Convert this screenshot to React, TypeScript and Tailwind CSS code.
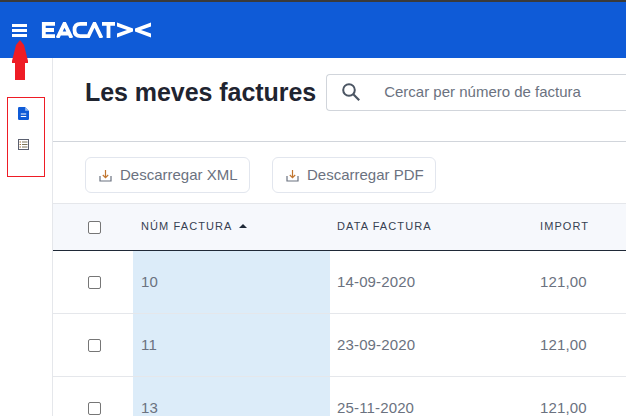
import React from "react";

const font = "font-['Liberation_Sans',Arial,sans-serif]";

const rows = [
  { num: "10", date: "14-09-2020", total: "121,00" },
  { num: "11", date: "23-09-2020", total: "121,00" },
  { num: "13", date: "25-11-2020", total: "121,00" },
];

const Logo = () => (
  <svg width="111" height="16" viewBox="0 0 111 16" fill="none" stroke="white" strokeWidth="3.8">
    <path d="M14 1.9H2.8V14.1H14M2.8 8H13" />
    <path d="M16.5 16L23.5 1.5L30.5 16M19.5 11.5H27.5" />
    <path d="M46 1.9H39.5Q33.5 1.9 33.5 8T39.5 14.1H46" />
    <path d="M46.5 16L53.5 1.5L60.5 16" />
    <path d="M61 1.9H74M67.5 1.9V16" />
    <path d="M76 0.5L92 6.5V9.5L76 15.5V11.5L86 8L76 4.5Z" fill="white" stroke="none" />
    <path d="M110 0.5L94 6.5V9.5L110 15.5V11.5L100 8L110 4.5Z" fill="white" stroke="none" />
  </svg>
);

const Arrow = () => (
  <svg width="16" height="40" viewBox="0 0 16 40" fill="#ee1c25" className="absolute left-[12px] top-[40px]">
    <path d="M8 0L12 5L16 21V23H13V40H3V23H0V21L4 5Z" />
  </svg>
);

const SearchIcon = () => (
  <svg width="18" height="18" viewBox="0 0 18 18" fill="none" stroke="#4b5563" strokeWidth="2">
    <circle cx="7" cy="7" r="5.8" />
    <path d="M11.3 11.3L17.2 17.2" strokeWidth="2.2" />
  </svg>
);

const DownloadIcon = () => (
  <svg width="13" height="13" viewBox="0 0 13 13" fill="none" strokeWidth="1.2">
    <path d="M1 7V12H12V7" stroke="#6b7280" />
    <path d="M6.5 1V8.5M3.8 6L6.5 8.7L9.2 6" stroke="#c2762f" />
  </svg>
);

const DocIcon = () => (
  <svg width="11" height="13" viewBox="0 0 11 13">
    <path d="M1.2 0H7L11 4V11.8Q11 13 9.8 13H1.2Q0 13 0 11.8V1.2Q0 0 1.2 0Z" fill="#0f5bd7" />
    <path d="M7.2 0.5V3.8H10.5Z" fill="#9cc0f2" />
    <path d="M2.8 7H8.2M2.8 9.5H8.2" stroke="white" strokeWidth="1.1" />
  </svg>
);

const ListIcon = () => (
  <svg width="11" height="11" viewBox="0 0 11 11" fill="none" stroke="#5b6070">
    <rect x="0.5" y="0.5" width="10" height="10" />
    <path d="M4 3H9.5M4 5.5H9.5M4 8H9.5" stroke="#7d7558" />
    <path d="M1.5 3H3M1.5 5.5H3M1.5 8H3" stroke="#a0723a" />
  </svg>
);

const Checkbox = () => (
  <span className="block h-[13px] w-[13px] rounded-[2px] border border-[#767676] bg-white" />
);

const Button = ({ label, width }: { label: string; width: string }) => (
  <button className={`flex h-[36px] items-center gap-[8px] rounded-md border border-[#e2e6ee] bg-white pl-[13px] text-[15px] text-[#6b7280] ${width}`}>
    <DownloadIcon />
    {label}
  </button>
);

export default function App() {
  return (
    <div className={`relative flex h-[416px] w-[626px] flex-col overflow-hidden bg-white ${font}`}>
      <header className="flex h-[58px] items-center gap-[14px] border-t-2 border-[#3a3a3a] bg-[#0f5bd7] pl-[12px]">
        <div className="flex w-[15px] flex-col gap-[2px]">
          <span className="h-[3px] bg-white" />
          <span className="h-[3px] bg-white" />
          <span className="h-[3px] bg-white" />
        </div>
        <Logo />
      </header>
      <Arrow />
      <div className="flex min-h-0 flex-1">
        <aside className="w-[53px] shrink-0 border-r border-[#e5e7eb] pl-[7px] pt-[39px]">
          <div className="flex h-[80px] w-[38px] flex-col gap-[19px] border border-[#ee1c25] pl-[10px] pt-[9px]">
            <DocIcon />
            <ListIcon />
          </div>
        </aside>
        <main className="min-w-0 flex-1">
          <div className="flex h-[84px] items-center gap-[10px] border-b border-[#d1d5db] pb-[15px] pl-[32px]">
            <h1 className="whitespace-nowrap pt-[2px] text-[25px] font-bold tracking-[-0.05px] text-[#1f2430]">Les meves factures</h1>
            <div className="flex h-[37px] flex-1 items-center rounded-l border border-r-0 border-[#d1d5db] pl-[15px]">
              <SearchIcon />
              <span className="ml-[24px] whitespace-nowrap text-[15px] text-[#6b7280]">Cercar per número de factura</span>
            </div>
          </div>
          <div className="flex h-[61px] items-center gap-[22px] pl-[32px] pt-[5px]">
            <Button label="Descarregar XML" width="w-[165px]" />
            <Button label="Descarregar PDF" width="w-[164px]" />
          </div>
          <div className="flex h-[48px] items-center border-y border-b-[#1f2937] border-t-[#e5e7eb] bg-[#f6f8fc] text-[11px] tracking-[1.1px] text-[#374151]">
            <div className="flex w-[80px] justify-center pl-[3px]"><Checkbox /></div>
            <div className="flex w-[197px] items-center gap-[6px] pb-[2px] pl-[8px]">
              NÚM FACTURA
              <span className="h-0 w-0 border-x-[4px] border-b-[4px] border-x-transparent border-b-[#1f2937]" />
            </div>
            <div className="w-[203px] pb-[2px] pl-[7px]">DATA FACTURA</div>
            <div className="pb-[2px] pl-[7px]">IMPORT</div>
          </div>
          {rows.map((row) => (
            <div key={row.num} className="flex h-[63px] items-center border-b border-[#e5e7eb] text-[15px] tracking-[0.15px] text-[#6b7280]">
              <div className="flex w-[80px] justify-center pl-[3px]"><Checkbox /></div>
              <div className="flex h-full w-[197px] items-center bg-[#dcecf9] pl-[8px]">{row.num}</div>
              <div className="w-[203px] pl-[7px]">{row.date}</div>
              <div className="pl-[7px]">{row.total}</div>
            </div>
          ))}
        </main>
      </div>
    </div>
  );
}
